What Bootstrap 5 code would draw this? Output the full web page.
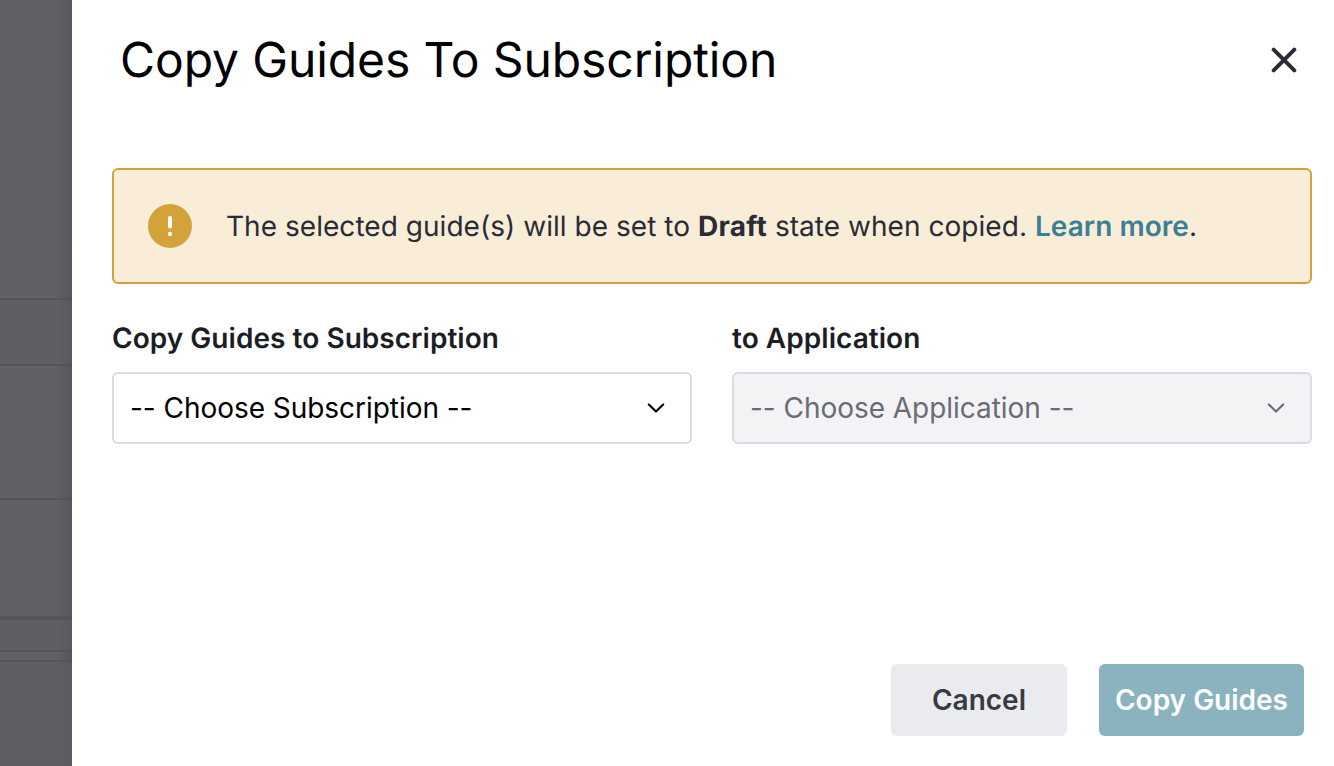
<!DOCTYPE html>
<html lang="en">
<head>
<meta charset="utf-8">
<title>Copy Guides To Subscription</title>
<link href="https://cdn.jsdelivr.net/npm/bootstrap@5.3.0/dist/css/bootstrap.min.css" rel="stylesheet">
<style>
body { font-family: Inter, "Liberation Sans", sans-serif; font-size: 28px; line-height: 40px; color: #2a2c35; text-rendering: geometricPrecision; }
.backdrop-strip { width: 72px; background: linear-gradient(90deg, transparent 56px, rgba(75,75,82,.45)), #606166; }
.backdrop-strip > div { border-bottom: 2px solid rgba(80,81,87,.75); }
.row-a { height: 300px; }
.row-b { height: 66px; background: rgba(92,93,98,.4); }
.row-c { height: 134px; }
.row-d { height: 120px; }
.backdrop-strip > .row-d { border-bottom-width: 4px; }
.row-e { height: 32px; background: rgba(92,93,98,.4); }
.row-f { height: 10px; }
.backdrop-strip > .row-g { background: rgba(92,93,98,.5); border: 0; }
.panel-head { height: 120px; padding: 0 37px 0 48px; }
.panel-head h1 { font-size: 48px; line-height: 60px; font-weight: 400; color: #000; letter-spacing: -.1px; }
.close-btn { width: 26px; height: 26px; color: #2a2c35; }
.panel-body { margin: 48px 22px 0 40px; }
.notice { height: 116px; padding: 0 34px; gap: 34px; border: 2px solid #d4a23a; border-radius: 6px; background: #faedd8; color: #2a2c35; }
.notice-text { letter-spacing: .04px; }
.notice b { font-weight: 700; letter-spacing: .25px; }
.notice a { color: #3a8095; font-weight: 600; }
.fields { gap: 40px; margin-top: 34px; }
.fields label { font-weight: 600; color: #1c1e26; margin-bottom: 14px; letter-spacing: .04px; }
.picker { height: 72px; padding: 0 25px 0 16px; border: 2px solid #d8dce3; border-radius: 6px; background: #fff; color: #000; letter-spacing: -.04px; }
.picker:disabled { background: #f3f3f6; color: #6a6c75; }
.panel-foot { padding: 0 30px 30px; gap: 32px; }
.panel-foot .btn { height: 72px; border: 0; border-radius: 6px; padding: 0; font-size: 28px; font-weight: 600; opacity: 1; }
.btn-cancel, .btn-cancel:hover { width: 176px; background: #eaebef; color: #3a3a45; }
.btn-copy, .btn-copy:disabled { width: 205px; background: #8ab2bf; color: #fff; }
</style>
</head>
<body>
<div class="d-flex vh-100 overflow-hidden">
  <div class="backdrop-strip d-flex flex-column flex-shrink-0">
    <div class="row-a"></div><div class="row-b"></div><div class="row-c"></div><div class="row-d"></div>
    <div class="row-e"></div><div class="row-f"></div><div class="row-g flex-grow-1"></div>
  </div>
  <main class="d-flex flex-column flex-grow-1 bg-white">
    <header class="panel-head d-flex align-items-center justify-content-between">
      <h1 class="m-0">Copy Guides To Subscription</h1>
      <button class="close-btn btn p-0 border-0 d-flex" aria-label="Close">
        <svg width="26" height="26" viewBox="0 0 26 26" fill="none" stroke="currentColor" stroke-width="4" stroke-linecap="round"><path d="M2.7 2.7 23.3 23.3M23.3 2.7 2.7 23.3"/></svg>
      </button>
    </header>
    <section class="panel-body">
      <div class="notice d-flex align-items-center">
        <svg class="flex-shrink-0" width="44" height="44" viewBox="0 0 44 44"><circle cx="22" cy="22" r="22" fill="#d4a23a"/><rect x="20" y="12" width="4" height="12.4" rx="2" fill="#fff"/><circle cx="22" cy="30" r="2.2" fill="#fff"/></svg>
        <span class="notice-text">The selected guide(s) will be set to <b>Draft</b> state when copied. <a href="#" class="text-decoration-none">Learn more</a>.</span>
      </div>
      <div class="fields d-flex">
        <div class="d-flex flex-column flex-fill w-50">
          <label for="sub">Copy Guides to Subscription</label>
          <button id="sub" class="picker d-flex align-items-center justify-content-between"><span>-- Choose Subscription --</span>
            <svg width="18" height="10" viewBox="0 0 18 10" fill="none" stroke="currentColor" stroke-width="2.1" stroke-linecap="round" stroke-linejoin="round"><path d="M1.8 1.4 9 8.6 16.2 1.4"/></svg></button>
        </div>
        <div class="d-flex flex-column flex-fill w-50">
          <label for="app">to Application</label>
          <button id="app" disabled class="picker d-flex align-items-center justify-content-between"><span>-- Choose Application --</span>
            <svg width="18" height="10" viewBox="0 0 18 10" fill="none" stroke="currentColor" stroke-width="2.1" stroke-linecap="round" stroke-linejoin="round"><path d="M1.8 1.4 9 8.6 16.2 1.4"/></svg></button>
        </div>
      </div>
    </section>
    <footer class="panel-foot d-flex justify-content-end mt-auto">
      <button class="btn btn-cancel">Cancel</button>
      <button class="btn btn-copy" disabled>Copy Guides</button>
    </footer>
  </main>
</div>
<script src="https://cdn.jsdelivr.net/npm/bootstrap@5.3.0/dist/js/bootstrap.bundle.min.js"></script>
</body>
</html>
